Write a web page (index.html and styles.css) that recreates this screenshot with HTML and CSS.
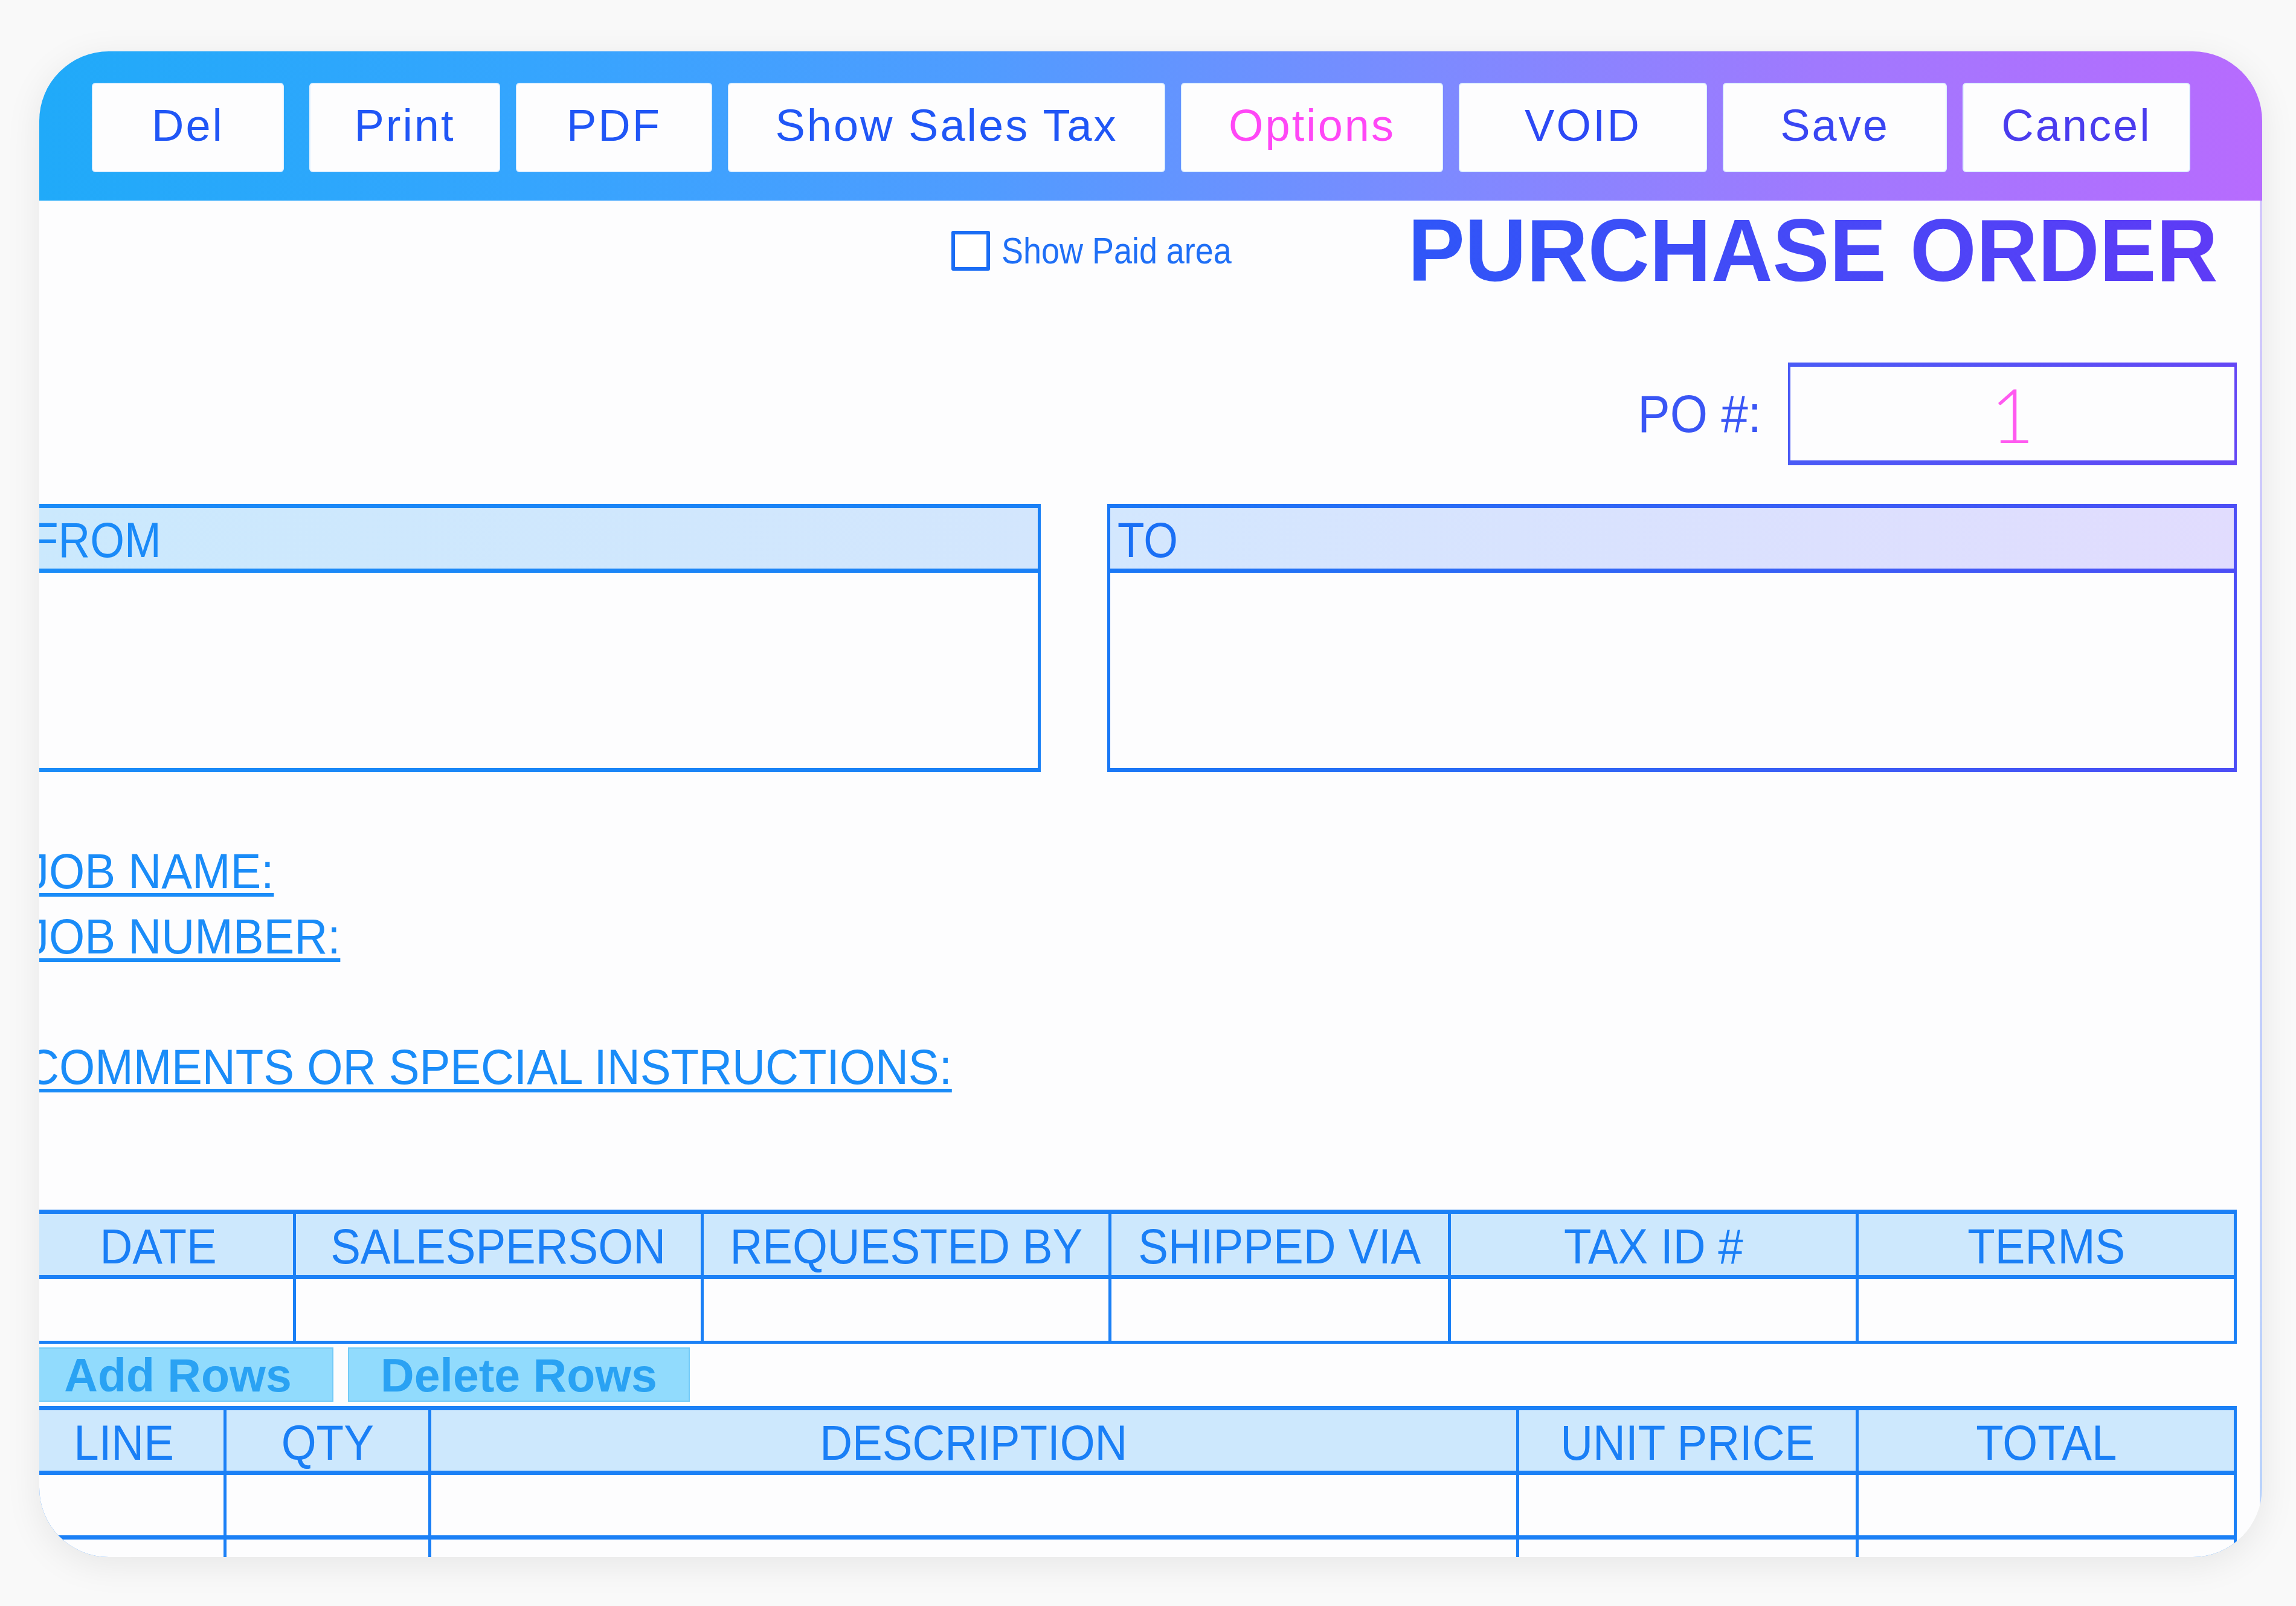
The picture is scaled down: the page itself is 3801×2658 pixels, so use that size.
FILE: index.html
```html
<!DOCTYPE html>
<html lang="en">
<head>
    <meta charset="UTF-8">
    <meta name="viewport" content="width=device-width, initial-scale=1.0">
    <title>Purchase Order</title>
    <link rel="stylesheet" href="styles.css">
</head>
<body>
    <div class="sheet">
        <header class="toolbar">
            <button class="tb-btn tb-del">Del</button>
            <button class="tb-btn tb-print">Print</button>
            <button class="tb-btn tb-pdf">PDF</button>
            <button class="tb-btn tb-tax">Show Sales Tax</button>
            <button class="tb-btn tb-options">Options</button>
            <button class="tb-btn tb-void">VOID</button>
            <button class="tb-btn tb-save">Save</button>
            <button class="tb-btn tb-cancel">Cancel</button>
        </header>

        <main class="sheet-body">
            <div class="form">
                <div class="title-row">
                    <label class="paid-toggle">
                        <span class="check-box"></span>
                        <span class="paid-text">Show Paid area</span>
                    </label>
                    <h1 class="doc-title">PURCHASE ORDER</h1>
                </div>

                <div class="po-row">
                    <span class="po-label">PO #:</span>
                    <div class="po-box">1</div>
                </div>

                <div class="parties">
                    <section class="party party-from">
                        <div class="party-head"><span>FROM</span></div>
                    </section>
                    <section class="party party-to">
                        <div class="party-head"><span>TO</span></div>
                    </section>
                </div>

                <div class="job-info">
                    <p><span class="field-label">JOB NAME:</span></p>
                    <p><span class="field-label">JOB NUMBER:</span></p>
                    <p>&nbsp;</p>
                    <p><span class="field-label">COMMENTS OR SPECIAL INSTRUCTIONS:</span></p>
                </div>

                <!-- order details -->
                <div class="grid-table details">
                    <div class="gt-head"><span>DATE</span></div>
                    <div class="gt-head"><span>SALESPERSON</span></div>
                    <div class="gt-head"><span>REQUESTED BY</span></div>
                    <div class="gt-head"><span>SHIPPED VIA</span></div>
                    <div class="gt-head"><span>TAX ID #</span></div>
                    <div class="gt-head"><span>TERMS</span></div>
                    <div class="gt-cell"></div>
                    <div class="gt-cell"></div>
                    <div class="gt-cell"></div>
                    <div class="gt-cell"></div>
                    <div class="gt-cell"></div>
                    <div class="gt-cell"></div>
                </div>

                <div class="row-tools">
                    <button class="row-btn row-add">Add Rows</button>
                    <button class="row-btn row-del">Delete Rows</button>
                </div>

                <!-- line items -->
                <div class="grid-table items">
                    <div class="gt-head"><span>LINE</span></div>
                    <div class="gt-head"><span>QTY</span></div>
                    <div class="gt-head"><span>DESCRIPTION</span></div>
                    <div class="gt-head"><span>UNIT PRICE</span></div>
                    <div class="gt-head"><span>TOTAL</span></div>
                    <div class="gt-cell"></div>
                    <div class="gt-cell"></div>
                    <div class="gt-cell"></div>
                    <div class="gt-cell"></div>
                    <div class="gt-cell"></div>
                    <div class="gt-cell"></div>
                    <div class="gt-cell"></div>
                    <div class="gt-cell"></div>
                    <div class="gt-cell"></div>
                    <div class="gt-cell"></div>
                </div>
            </div>
        </main>
    </div>
</body>
</html>
```

FILE: styles.css
```css
* {
    margin: 0;
    padding: 0;
    box-sizing: border-box;
    font-family: 'Liberation Sans', Arial, sans-serif;
}

body {
    background-color: #f9f9f9;
    padding: 85px 56px 81px 65px;
}

.sheet {
    width: 3680px;
    height: 2492px;
    border-radius: 115px;
    overflow: hidden;
    background-color: #fdfdfe;
    box-shadow: 0 12px 60px rgba(0, 0, 0, 0.08);
    display: flex;
    flex-direction: column;
}

/* toolbar */

.toolbar {
    height: 247px;
    flex-shrink: 0;
    display: flex;
    gap: 26px;
    padding: 52px 0 0 87px;
    background: linear-gradient(90deg, #20aaf9 0%, #35a5fe 22%, #4f9cff 42%, #7b8bff 62%, #a079fe 80%, #b76bfe 100%);
}

.tb-btn {
    height: 148px;
    padding-bottom: 8px;
    background-color: #fdfdfe;
    border: 2px solid #e2f1ff;
    border-radius: 6px;
    font-size: 74px;
    letter-spacing: 3px;
    color: #2056f6;
    cursor: pointer;
}

.tb-del { width: 318px; margin-right: 16px; }
.tb-print { width: 316px; }
.tb-pdf { width: 325px; }
.tb-tax { width: 724px; }
.tb-options { width: 434px; color: #ff47f6; }
.tb-void { width: 411px; color: #2c49f5; }
.tb-save { width: 371px; color: #3946f3; }
.tb-cancel { width: 377px; color: #4a3cee; }

/* body */

.sheet-body {
    flex: 1;
    overflow: hidden;
    border-right: 4px solid;
    border-image: linear-gradient(180deg, #d2c6fb, #b8d3fb) 1;
}

.form {
    width: 3668px;
    margin-left: -30px;
}

.title-row {
    height: 147px;
    margin-top: 9px;
    padding-right: 31px;
    display: flex;
    justify-content: flex-end;
    align-items: center;
    gap: 180px;
}

.paid-toggle {
    display: flex;
    align-items: center;
    gap: 19px;
}

.check-box {
    width: 64px;
    height: 66px;
    border: 6px solid #1a6df5;
    border-radius: 3px;
    background-color: #fff;
}

.paid-text {
    display: inline-block;
    font-size: 62px;
    color: #1f6ff6;
    transform: scaleX(0.87);
    transform-origin: left center;
}

.doc-title {
    font-size: 147px;
    line-height: 1;
    font-weight: bold;
    background: linear-gradient(90deg, #2f56f8, #5e3bf6);
    -webkit-background-clip: text;
    background-clip: text;
    color: transparent;
    transform: scaleX(0.96);
    transform-origin: right center;
}

.po-row {
    margin-top: 112px;
    display: flex;
    justify-content: flex-end;
    align-items: center;
    gap: 44px;
}

.po-label {
    display: inline-block;
    font-size: 88px;
    color: #3a56f5;
    transform: scaleX(0.91);
    transform-origin: right center;
}

.po-box {
    width: 743px;
    height: 170px;
    border-style: solid;
    border-width: 7px 4px 8px 4px;
    border-image: linear-gradient(90deg, #4a5bf6, #6447f5) 1;
    display: flex;
    justify-content: center;
    align-items: center;
    font-family: Lato, 'DejaVu Sans', sans-serif;
    font-weight: 300;
    font-size: 125px;
    color: #ff5af0;
}

/* from / to */

.parties {
    margin-top: 64px;
    display: grid;
    grid-template-columns: 1688px 1fr;
    gap: 110px;
}

.party {
    height: 444px;
    border-style: solid;
    border-width: 7px 5px 7px 5px;
}

.party-head {
    height: 107px;
    padding: 6px 0 0 12px;
    border-bottom: 7px solid;
    display: flex;
    align-items: center;
    font-size: 81px;
}

.party-head span {
    display: inline-block;
    transform: scaleX(0.9);
    transform-origin: left center;
}

.party-from {
    border-image: linear-gradient(90deg, #1a8cf8, #1a80f6) 1;
}

.party-from .party-head {
    color: #1a8af8;
    background: linear-gradient(90deg, #cbe9fd, #d3e6fd);
    border-image: linear-gradient(90deg, #1a8cf8, #1a80f6) 1;
}

.party-to {
    border-image: linear-gradient(90deg, #1a78f6, #4c4ef6) 1;
}

.party-to .party-head {
    color: #1a6ff5;
    background: linear-gradient(90deg, #d3e7fe, #e1dcfe);
    border-image: linear-gradient(90deg, #1a78f6, #4c4ef6) 1;
}

/* job info */

.job-info {
    margin-top: 110px;
    padding-left: 8px;
    font-size: 81px;
    line-height: 108px;
    color: #1a8cf8;
}

.field-label {
    display: inline-block;
    text-decoration: underline;
    text-decoration-thickness: 6px;
    text-underline-offset: 8px;
    transform: scaleX(0.94);
    transform-origin: left center;
}

/* tables */

.grid-table {
    display: grid;
    column-gap: 5px;
    row-gap: 7px;
    padding: 7px 5px 5px 5px;
    background-color: #1b80f6;
}

.details {
    margin-top: 182px;
    grid-template-columns: 445px 670px 670px 557px 670px 1fr;
    grid-template-rows: 101px 102px;
}

.items {
    margin-top: 7px;
    grid-template-columns: 330px 334px 1796px 557px 1fr;
    grid-template-rows: 100px 100px 100px;
}

.gt-head {
    background-color: #cde8fd;
    color: #1a7ff6;
    font-size: 81px;
    display: flex;
    justify-content: center;
    align-items: center;
    padding-top: 8px;
    white-space: nowrap;
}

.gt-head span {
    display: inline-block;
    transform: scaleX(0.92);
}

.gt-cell {
    background-color: #fdfdfe;
}

.row-tools {
    margin-top: 6px;
    padding-left: 2px;
    display: flex;
    gap: 24px;
}

.row-btn {
    height: 90px;
    background-color: #91dbfd;
    border: 2px solid #74cbf8;
    font-size: 77px;
    font-weight: bold;
    color: #2aa2f3;
    cursor: pointer;
}

.row-add { width: 515px; }
.row-del { width: 566px; }
```
